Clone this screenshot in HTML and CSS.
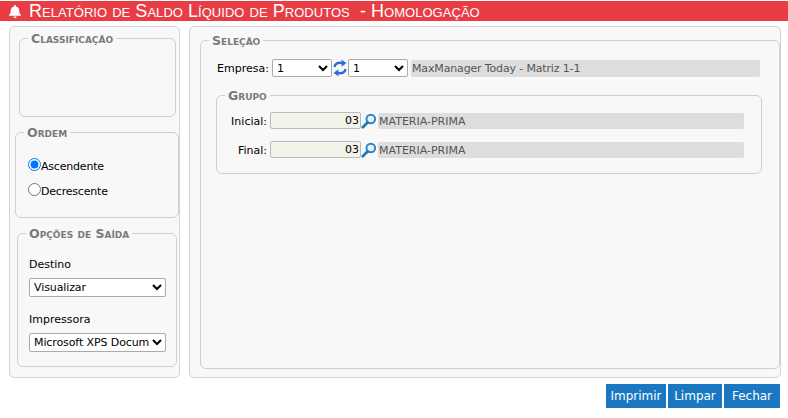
FILE: index.html
```html
<!DOCTYPE html>
<html lang="pt-BR">
<head>
<meta charset="utf-8">
<title>Relatório de Saldo Líquido de Produtos</title>
<link rel="stylesheet" href="styles.css">
</head>
<body>
<header class="title-bar">
  <svg class="bell" viewBox="0 0 12 13" width="12" height="13"><path fill="#fff" d="M6 0a1 1 0 0 1 1 1v.6c2 .4 3.200 2 3.200 4 0 2.600.8 3.400 1.800 4.400v.8H0V10c1-1 1.800-1.800 1.800-4.400 0-2 1.200-3.600 3.200-4V1a1 1 0 0 1 1-1zM4.500 11.500h3a1.500 1.500 0 0 1-3 0z"/></svg>
  <h1 class="title">Relatório de Saldo Líquido de Produtos &nbsp;- Homologação</h1>
</header>
<main class="panels">
  <aside class="panel side">
    <fieldset class="box box-class"><legend>Classificação</legend></fieldset>
    <fieldset class="box box-order"><legend>Ordem</legend>
      <div class="order-body">
        <label class="radio"><input type="radio" name="ordem" checked><span class="radio-text">Ascendente</span></label>
        <label class="radio"><input type="radio" name="ordem"><span class="radio-text">Decrescente</span></label>
      </div>
    </fieldset>
    <fieldset class="box box-out"><legend>Opções de Saída</legend>
      <div class="out-body">
        <label class="out-label" for="destino">Destino</label>
        <select id="destino" class="out-select"><option>Visualizar</option></select>
        <label class="out-label out-label-2" for="impressora">Impressora</label>
        <select id="impressora" class="out-select"><option>Microsoft XPS Document Writer</option></select>
      </div>
    </fieldset>
  </aside>
  <section class="panel content">
    <fieldset class="box box-sel"><legend>Seleção</legend>
      <div class="sel-body">
        <div class="row-emp">
          <span class="lbl-emp">Empresa:</span>
          <select class="emp-select"><option>1</option></select>
          <svg class="sync" viewBox="0 0 14 18" width="14" height="18"><g fill="none" stroke="#2a6fd6" stroke-width="2.400"><path d="M1.500 8C2 4.500 5 3 9.500 4.200"/><path d="M12.500 10C12 13.500 9 15 4.500 13.800"/></g><path fill="#2a6fd6" d="M8.500 0.800l5 3.200-4.800 3.800zM5.500 17.200l-5-3.200 4.800-3.800z"/></svg>
          <select class="emp-select"><option>1</option></select>
          <input class="ro ro-emp" value="MaxManager Today - Matriz 1-1" readonly>
        </div>
        <fieldset class="box box-group"><legend>Grupo</legend>
          <div class="row-grp">
            <span class="lbl-grp">Inicial:</span>
            <input class="code" value="03" readonly>
            <svg class="lens" viewBox="0 0 16 16" width="16" height="16"><circle cx="9.800" cy="6" r="4.300" fill="#e8f3fb" stroke="#2a86c8" stroke-width="2"/><path d="M6.500 9.500L1.800 14.200" stroke="#1f78b8" stroke-width="2.800" stroke-linecap="round"/></svg>
            <input class="ro ro-grp" value="MATERIA-PRIMA" readonly>
          </div>
          <div class="row-grp row-grp-2">
            <span class="lbl-grp">Final:</span>
            <input class="code" value="03" readonly>
            <svg class="lens" viewBox="0 0 16 16" width="16" height="16"><circle cx="9.800" cy="6" r="4.300" fill="#e8f3fb" stroke="#2a86c8" stroke-width="2"/><path d="M6.500 9.500L1.800 14.200" stroke="#1f78b8" stroke-width="2.800" stroke-linecap="round"/></svg>
            <input class="ro ro-grp" value="MATERIA-PRIMA" readonly>
          </div>
        </fieldset>
      </div>
    </fieldset>
  </section>
</main>
<footer class="actions">
  <button class="btn btn-print">Imprimir</button>
  <button class="btn btn-clear">Limpar</button>
  <button class="btn btn-close">Fechar</button>
</footer>
</body>
</html>
```
FILE: styles.css
```css
* { box-sizing: border-box; }
html, body { margin: 0; padding: 0; background: #fff; }
body { width: 788px; height: 418px; overflow: hidden; font: 11px/14px "DejaVu Sans", Verdana, sans-serif; color: #000; }

.title-bar { display: flex; align-items: center; height: 20px; margin-top: 1px; background: #e83d45; padding-left: 9px; }
.bell { flex: none; margin-right: 8px; }
.title { margin: 0; font: 400 18px/20px "Liberation Sans", Arial, sans-serif; font-variant: small-caps; letter-spacing: .04px; color: #fff; white-space: pre; }

.panels { display: flex; gap: 9px; margin: 5px 8px 0 9px; height: 352px; }
.panel { border: 1px solid #d4d4d4; border-radius: 5px; background: #f8f8f8; }
.side { flex: none; width: 171px; padding-top: 4px; }
.content { flex: 1; padding: 6px 0 0 10px; }

.box { margin: 0; padding: 0; border: 1px solid #cfcfcf; border-radius: 6px; min-width: 0; }
.box legend { padding: 0 3px; margin-left: 8px; font: 700 12.500px/15px "DejaVu Sans", Verdana, sans-serif; font-variant: small-caps; color: #7a7a7a; }

.box-class { width: 157px; height: 86px; margin-left: 9px; }
.box-order { width: 164px; height: 93px; margin: 8px 0 0 5px; }
.box-out { width: 160px; height: 141px; margin: 8px 0 0 7px; }

.order-body { margin: 18px 0 0 12px; }
.radio { display: flex; align-items: flex-start; height: 25px; }
.radio input { margin: 0; width: 13px; height: 13px; flex: none; }
.radio-text { margin-top: 2px; letter-spacing: -.2px; }

.out-body { margin: 17px 0 0 11px; }
.out-label { display: block; line-height: 14px; }
.out-label-2 { margin-top: 16px; }
.out-select { display: block; width: 137px; height: 19px; margin-top: 6px; padding: 0; font: 11px "DejaVu Sans", Verdana, sans-serif; letter-spacing: -.1px; border: 1px solid #aaa; border-radius: 2px; background-color: #fff; color: #000; }

.box-sel { width: 580px; height: 336px; }
.sel-body { margin: 11px 0 0 15px; }
.row-emp { display: flex; align-items: center; height: 18px; padding-left: 1px; }
.lbl-emp { width: 55px; padding-top: 2px; }
.emp-select { width: 60px; height: 18px; padding: 0; font: 11px "DejaVu Sans", Verdana, sans-serif; border: 1px solid #aaa; border-radius: 2px; background-color: #fff; color: #000; }
.sync { flex: none; margin: 0 1px; }
.ro { border: 0; margin: 0; padding: 1px 1px 0; font: 11px "DejaVu Sans", Verdana, sans-serif; color: #555; background: #ddd; border-radius: 2px; outline: none; }
.ro-emp { width: 349px; height: 17px; margin-left: 3px; letter-spacing: -.15px; }

.box-group { width: 546px; height: 86px; margin-top: 11px; padding: 9px 0 0 0; }
.row-grp { display: flex; align-items: center; height: 17px; }
.row-grp-2 { margin-top: 12px; }
.lbl-grp { width: 50px; margin-right: 3px; padding-top: 2px; text-align: right; }
.code { width: 91px; height: 17px; margin: 0; padding: 0 1px 0 0; text-align: right; font: 11px "DejaVu Sans", Verdana, sans-serif; background: #f2f4e9; border: 1px solid #bbb; border-radius: 2px; color: #000; outline: none; }
.lens { flex: none; margin: 0 1px 0 0; }
.ro-grp { width: 366px; height: 16px; }

.actions { display: flex; justify-content: flex-end; gap: 2px; margin: 6px 8px 0 0; }
.btn { height: 24px; padding: 0; border: 0; background: #1a78c2; color: #fff; font: 12px "DejaVu Sans", Verdana, sans-serif; }
.btn-print { width: 60px; }
.btn-clear { width: 54px; }
.btn-close { width: 56px; }
```
